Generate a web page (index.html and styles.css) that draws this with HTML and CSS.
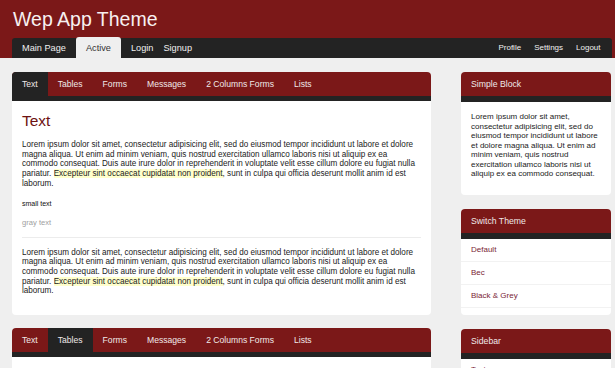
FILE: index.html
```html
<!DOCTYPE html>
<html>
<head>
<meta charset="utf-8">
<title>Wep App Theme</title>
<link rel="stylesheet" href="styles.css">
</head>
<body>
<div class="header">
  <h1 class="title">Wep App Theme</h1>
  <div class="nav">
    <ul class="nav-left">
      <li><a href="#">Main Page</a></li>
      <li class="active"><a href="#">Active</a></li>
      <li class="login"><a href="#">Login</a></li>
      <li class="signup"><a href="#">Signup</a></li>
    </ul>
    <ul class="nav-right">
      <li><a href="#">Profile</a></li>
      <li><a href="#">Settings</a></li>
      <li><a href="#">Logout</a></li>
    </ul>
  </div>
</div>
<div class="wrapper">
  <div class="main">
    <div class="panel">
      <ul class="tabs">
        <li class="on"><a href="#">Text</a></li>
        <li><a href="#">Tables</a></li>
        <li><a href="#">Forms</a></li>
        <li><a href="#">Messages</a></li>
        <li><a href="#">2 Columns Forms</a></li>
        <li><a href="#">Lists</a></li>
      </ul>
      <div class="content">
        <h2 class="heading">Text</h2>
        <p class="para">Lorem ipsum dolor sit amet, consectetur adipisicing elit, sed do eiusmod tempor incididunt ut labore et dolore<br>magna aliqua. Ut enim ad minim veniam, quis nostrud exercitation ullamco laboris nisi ut aliquip ex ea<br>commodo consequat. Duis aute irure dolor in reprehenderit in voluptate velit esse cillum dolore eu fugiat nulla<br>pariatur. <span class="hl">Excepteur sint occaecat cupidatat non proident</span>, sunt in culpa qui officia deserunt mollit anim id est<br>laborum.</p>
        <p class="small">small text</p>
        <p class="gray">gray text</p>
        <hr class="divider">
        <p class="para">Lorem ipsum dolor sit amet, consectetur adipisicing elit, sed do eiusmod tempor incididunt ut labore et dolore<br>magna aliqua. Ut enim ad minim veniam, quis nostrud exercitation ullamco laboris nisi ut aliquip ex ea<br>commodo consequat. Duis aute irure dolor in reprehenderit in voluptate velit esse cillum dolore eu fugiat nulla<br>pariatur. <span class="hl">Excepteur sint occaecat cupidatat non proident</span>, sunt in culpa qui officia deserunt mollit anim id est<br>laborum.</p>
      </div>
    </div>
    <div class="panel">
      <ul class="tabs">
        <li><a href="#">Text</a></li>
        <li class="on"><a href="#">Tables</a></li>
        <li><a href="#">Forms</a></li>
        <li><a href="#">Messages</a></li>
        <li><a href="#">2 Columns Forms</a></li>
        <li><a href="#">Lists</a></li>
      </ul>
      <div class="content">
        <h2 class="heading">Tables</h2>
        <p class="para">Lorem ipsum dolor sit amet, consectetur adipisicing elit.</p>
      </div>
    </div>
  </div>
  <div class="sidebar">
    <div class="block">
      <h3 class="block-title">Simple Block</h3>
      <div class="block-body">
        <p class="block-text">Lorem ipsum dolor sit amet, consectetur adipisicing elit, sed do eiusmod tempor incididunt ut labore et dolore magna aliqua. Ut enim ad minim veniam, quis nostrud exercitation ullamco laboris nisi ut aliquip ex ea commodo consequat.</p>
      </div>
    </div>
    <div class="block">
      <h3 class="block-title">Switch Theme</h3>
      <ul class="block-list">
        <li><a href="#">Default</a></li>
        <li><a href="#">Bec</a></li>
        <li><a href="#">Black &amp; Grey</a></li>
      </ul>
    </div>
    <div class="block">
      <h3 class="block-title">Sidebar</h3>
      <ul class="block-list">
        <li><a href="#">Text</a></li>
        <li><a href="#">Tables</a></li>
      </ul>
    </div>
  </div>
</div>
</body>
</html>
```
FILE: styles.css
```css
* { box-sizing: border-box; }
html, body { margin: 0; padding: 0; }
body {
  background: #efefef;
  font-family: "Liberation Sans", Arial, sans-serif;
  color: #222;
  overflow: hidden;
}
a { text-decoration: none; color: inherit; }
ul { list-style: none; margin: 0; padding: 0; }

.header {
  background: #7b1818;
  padding: 0 3px 0 12px;
}
.title {
  margin: 0;
  height: 38px;
  line-height: 38px;
  padding-left: 1px;
  font-size: 19.5px;
  font-weight: normal;
  color: #f7f0f0;
}
.nav {
  display: flex;
  justify-content: space-between;
  align-items: flex-end;
  height: 20px;
  background: #232323;
  border-radius: 3px 3px 0 0;
}
.nav-left, .nav-right { display: flex; height: 20px; }
.nav-left li a {
  display: block;
  padding: 0 10px;
  font-size: 9.2px;
  line-height: 20px;
  color: #f0f0f0;
}
.nav-left li.active a {
  background: #efefef;
  color: #333;
  border-radius: 3px 3px 0 0;
  height: 21px;
  margin-top: -1px;
  line-height: 22px;
}
.nav-left li.login a { padding: 0 10px 0 10px; }
.nav-left li.signup a { padding: 0 10px 0 0; }
.nav-right { padding-right: 5px; }
.nav-right li a {
  display: block;
  padding: 0 6.5px;
  font-size: 8px;
  line-height: 20px;
  color: #f0f0f0;
}

.wrapper {
  display: flex;
  align-items: flex-start;
  gap: 30px;
  padding: 14px 4px 0 12px;
}
.main {
  width: 419px;
  display: flex;
  flex-direction: column;
  gap: 13px;
}
.panel {
  background: #fff;
  border-radius: 4px;
}
.tabs {
  display: flex;
  height: 29px;
  background: #7b1818;
  border-bottom: 5px solid #232323;
  border-radius: 4px 4px 0 0;
}
.tabs li a {
  display: block;
  padding: 0 10px;
  font-size: 8.6px;
  line-height: 24px;
  color: #f0e8e8;
}
.tabs li:first-child a { border-top-left-radius: 4px; }
.tabs li.on a { background: #232323; }

.content { padding: 11px 10px 9px 10px; }
.heading {
  margin: 0 0 10px;
  font-size: 15.5px;
  line-height: 18px;
  font-weight: normal;
  color: #6e1212;
}
.para {
  margin: 0 0 10px;
  font-size: 8.15px;
  line-height: 9.7px;
  color: #222;
  white-space: nowrap;
}
.hl { background: #ffffcc; }
.small {
  margin: 0 0 10px;
  font-size: 7px;
  line-height: 9px;
  color: #111;
}
.gray {
  margin: 0 0 9px;
  font-size: 7.6px;
  line-height: 10px;
  color: #a0a0a0;
}
.divider {
  border: 0;
  border-top: 1px solid #ececec;
  margin: 0 0 10px;
}

.sidebar {
  width: 150px;
  display: flex;
  flex-direction: column;
  gap: 14px;
}
.block {
  background: #fff;
  border-radius: 4px;
}
.block-title {
  margin: 0;
  height: 30px;
  background: #7b1818;
  border-bottom: 6px solid #232323;
  border-radius: 4px 4px 0 0;
  padding-left: 10px;
  font-size: 8.7px;
  line-height: 24px;
  font-weight: normal;
  color: #f0e8e8;
}
.block-body { padding: 10px 10px 16px 10px; }
.block-text {
  margin: 0;
  font-size: 8px;
  line-height: 9.5px;
  color: #222;
}
.block-list { padding-bottom: 7px; }
.block-list li {
  border-bottom: 1px solid #f2f2f2;
}
.block-list li a {
  display: block;
  padding-left: 10px;
  height: 22px;
  line-height: 22px;
  font-size: 8px;
  color: #7a2535;
}
```
